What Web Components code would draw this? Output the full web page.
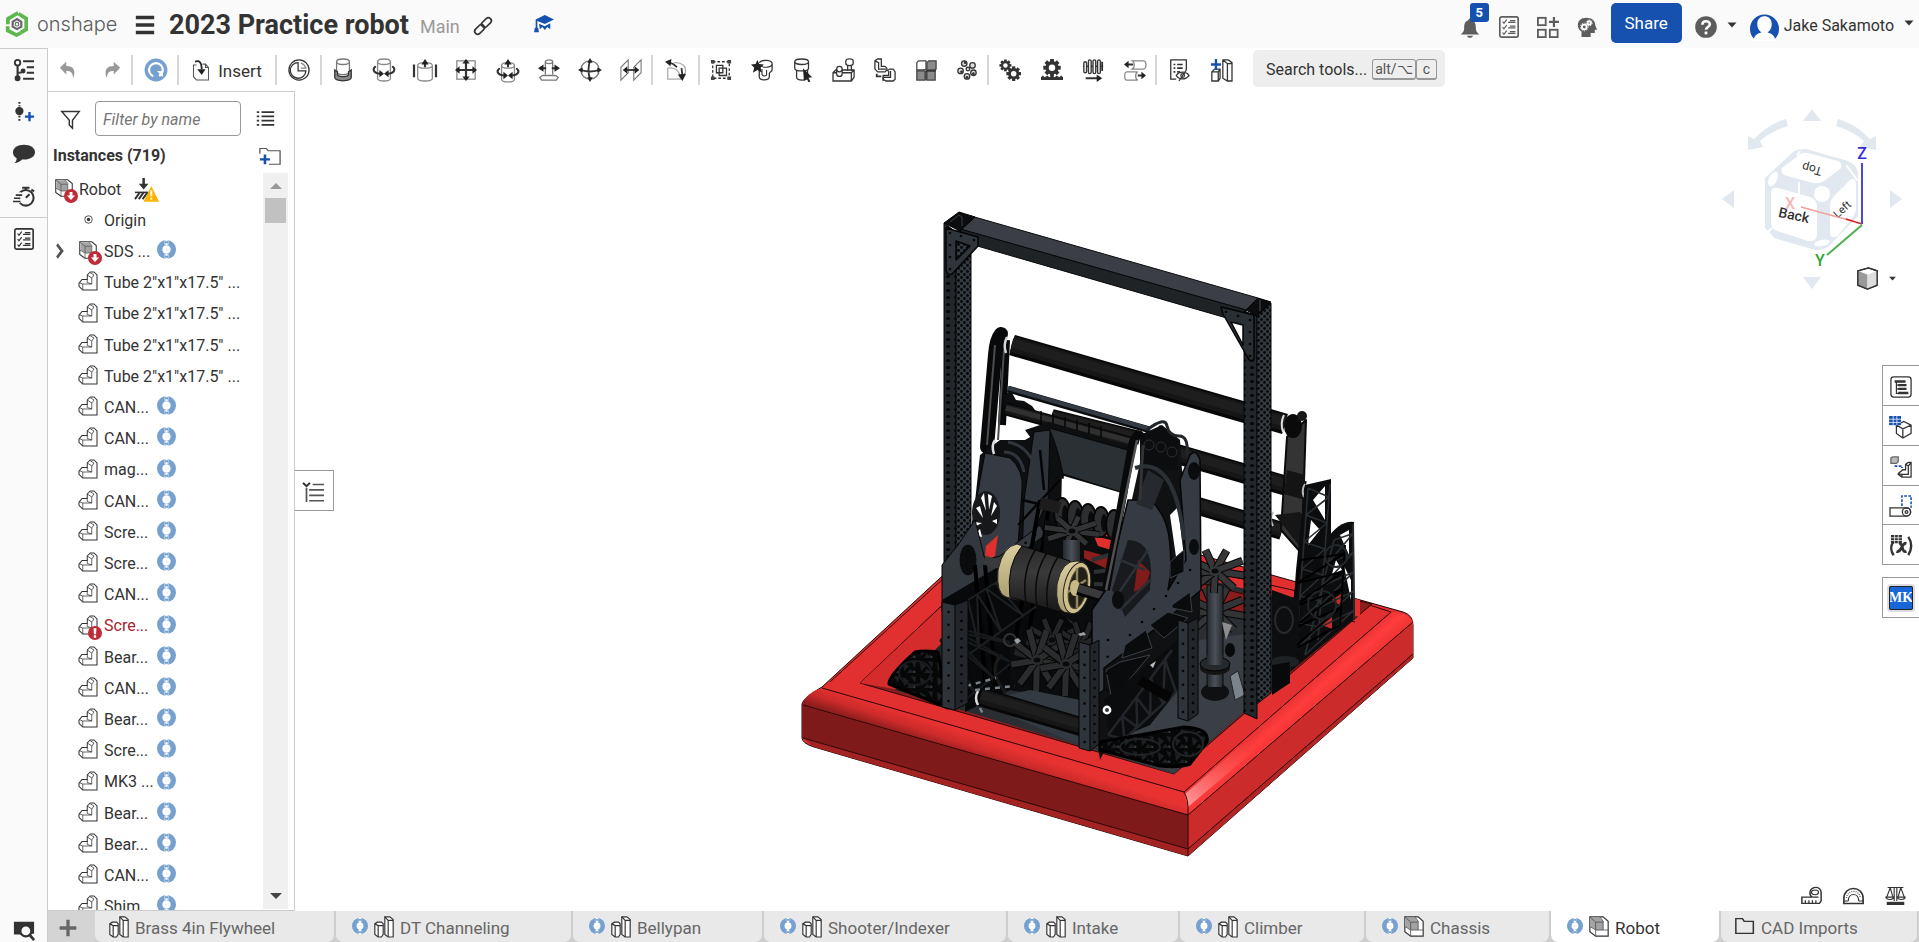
<!DOCTYPE html>
<html lang="en">
<head>
<meta charset="utf-8">
<title>2023 Practice robot</title>
<style>
html, body { margin: 0; height: 100%; }
body { font-family: Roboto, "Liberation Sans", sans-serif; font-size: 16px; color: #333; background: #fff; }
</style>
</head>
<body>
<os-app></os-app>
<script>
const reset = `
  *, *::before, *::after { box-sizing: border-box; }
  button { font: inherit; color: inherit; background: none; border: 0; margin: 0; padding: 0; display: flex; align-items: center; justify-content: center; cursor: pointer; }
`;

function define(name, css, html, setup) {
  const template = document.createElement('template');
  template.innerHTML = `<style>${reset}${css}</style>${html}`;
  customElements.define(name, class extends HTMLElement {
    constructor() {
      super();
      this.attachShadow({ mode: 'open' }).append(template.content.cloneNode(true));
    }
    connectedCallback() { if (setup) setup(this, this.shadowRoot); }
  });
}

/* Icons, each on a 24 x 24 grid */
const gear = (cx, cy, r, hole, bg = '#fff') => {
  let teeth = '';
  for (let i = 0; i < 8; i++) teeth += `<rect x="${cx - r * 0.22}" y="${cy - r}" width="${r * 0.44}" height="${r}" transform="rotate(${i * 45} ${cx} ${cy})"/>`;
  return `<g fill="#333" stroke="none">${teeth}<circle cx="${cx}" cy="${cy}" r="${r * 0.76}"/><circle cx="${cx}" cy="${cy}" r="${hole}" fill="${bg}"/></g>`;
};
const cyl = (x, y, w, h) => `<path d="M${x} ${y + 3}v${h}c0 4 ${w} 4 ${w} 0v-${h}" fill="#fff"/><ellipse cx="${x + w / 2}" cy="${y + 3}" rx="${w / 2}" ry="3" fill="#fff"/>`;
const asm = '<path d="M1 1h16l6 5v17H8l-7-5z" fill="#fff"/><path d="M2 2h11l4 4v10H8l-6-4z" fill="#a3a3a3" stroke="none"/><path d="M13 1l4 5v10h6M8 7h9M8 7v16M1 1l7 6M17 16H8l-7-4" stroke="#555" stroke-width="1"/>';

const icons = {
  logo: '<g fill="none" stroke="#5cb84c" stroke-width="3.4"><path d="M13 1.8 3.6 7.2v5"/><path d="M3.4 14v4l8.200 4.200 4-2"/><path d="M13.500 2.500 20.500 7v10l-5 3"/></g><path d="M12 7.500 8 10v4.500l4 2.200 4-2.200V10z" stroke="#666" stroke-width="2"/><circle cx="12" cy="12.200" r="1.700" stroke="#666" stroke-width="1"/>',
  menu: '<path d="M2 3h20M2 12h20M2 21h20" stroke-width="4.400"/>',
  link: '<g stroke-width="2.200" transform="rotate(-45 12 12)"><rect x="-2" y="8" width="15" height="8" rx="4"/><rect x="11" y="8" width="15" height="8" rx="4"/></g>',
  grad: '<g fill="#1651b0" stroke="none"><path d="M13 0 24 6 13 12 4 8V18H2V6z"/><path d="M6 11.500 13 15l6.500-4v8L16 16l-3 4-3-4-3 3z"/><path d="M1 17h4l1 6H0z"/></g>',
  bell: '<path d="M12 1.500a2 2 0 0 1 2 2c4 1 5 4 5 8 0 4 1 5 4 7.500H1c3-2.500 4-3.500 4-7.500 0-4 1-7 5-8a2 2 0 0 1 2-2zM8.500 20.500h7c-.5 3-6.500 3-7 0z" fill="#5d5d5d" stroke="none"/>',
  check: '<rect x="2" y="1" width="20" height="22" rx="2" stroke-width="1.800"/><path d="M5 6l1.500 2L9.500 4M5 12l1.500 2 3-4M5 18l1.500 2 3-4" stroke-width="1.300"/><path d="M11 7h8M11 13h8M11 19h8M13 5h6M13 11h6M13 17h6" stroke-width="1.500"/>',
  grid: '<g stroke-width="2"><rect x="1" y="2" width="8.500" height="8"/><rect x="1" y="15" width="8.500" height="8"/><rect x="14" y="15" width="8.500" height="8"/><path d="M18.500 1v11M13 6.500h11" stroke-width="2.400"/></g>',
  head: '<path d="M11 2c6 0 10 3 10 8l2 5h-2.500v3.500H16V23H6v-6c-3-2-4-5-4-7 0-5 4-8 9-8z" fill="#5d5d5d" stroke="none"/><g fill="none" stroke="#fff" stroke-width="2"><circle cx="9" cy="12" r="2.600"/><circle cx="14.500" cy="7.500" r="1.800"/></g><g stroke="#fff" stroke-width="1" stroke-dasharray="1.300 1.500"><circle cx="9" cy="12" r="4.200"/><circle cx="14.500" cy="7.500" r="3.200"/></g>',
  help: '<circle cx="12" cy="12" r="11.800" fill="#5d5d5d" stroke="none"/><path d="M8 9.500c0-5 8.200-5 8.200-.5 0 3-4.200 3-4.200 6" stroke="#fff" stroke-width="2.800"/><rect x="10.500" y="17" width="3" height="3" fill="#fff" stroke="none"/>',
  caret: '<path d="M3 7h18l-9 10z" fill="#333" stroke="none"/>',
  user: '<path d="M3 22a12 12 0 1 1 18 0z" fill="#1651b0" stroke="none"/><path d="M3 24c0-5 4-6.500 6.500-7C7 15 6 13 6 10c0-4.500 3-6.500 6-6.500s6 2 6 6.500c0 3-1 5-3.500 7 2 .5 6.500 2 6.500 7z" fill="#fff" stroke="none"/>',
  undo: '<path d="M2 9.500 9 3v4.500c8 0 11 5 7.500 13.500-.3-6-2.500-8-7.500-8V17z" fill="#999" stroke="none"/>',
  redo: '<path d="M22 9.500 15 3v4.500c-8 0-11 5-7.500 13.500.3-6 2.500-8 7.500-8V17z" fill="#999" stroke="none"/>',
  rebuild: '<circle cx="12" cy="12" r="12.500" fill="#75a0cf" stroke="none"/><path d="M9 18.800a7.500 7.500 0 1 1 6.500-.3" stroke="#fff" stroke-width="2.400"/><path d="M13 13h6.500v7z" fill="#fff" stroke="none"/>',
  insert: '<path d="M6 6H2v14l4 4h16V9l-4-4h-4M18 5v4h4M6 6v-0" stroke="#555"/><path d="M4 2c6-2 9 1 9 9" stroke="#222" stroke-width="2.200"/><path d="M13 18l-6-7h11z" fill="#222" stroke="none"/>',
  clock: '<circle cx="12" cy="12" r="11"/><path d="M11 4a8.500 8.500 0 1 0 8.500 9H11z"/><path d="M14 4.500a8 8 0 0 1 5.500 5.500H14" stroke="#888"/>',
  fasten: '<g stroke="#777">' + cyl(5, 0, 14, 11) + '</g><path d="M3 12v8c0 5 18 5 18 0v-8l-3 2v3c0 3-12 3-12 0v-3z" fill="#8a8a8a"/>',
  revolve: '<g stroke="#888">' + cyl(5, 0, 14, 18) + '</g><path d="M3 8c-5 4-1 8 5 8M21 8c5 4 1 8-5 8" stroke-width="2.200"/><path d="M7 12v8l5-4zM17 12v8l-5-4z" fill="#222" stroke="none"/>',
  slider: '<g stroke="#888">' + cyl(4, 4, 16, 14) + '</g><path d="M0 6v14M24 6v14" stroke-width="2.400"/><path d="M12 9V3" stroke-width="2.400"/><path d="M8 6l4-6 4 6z" fill="#222" stroke="none"/>',
  planar: '<rect x="2" y="2" width="20" height="20" stroke="#888"/><path d="M12 3v18M3 12h18" stroke-width="2.400"/><path d="M12 0l4 5H8zM12 24l4-5H8zM0 12l5-4v8zM24 12l-5-4v8z" fill="#222" stroke="none"/>',
  cylmate: '<g stroke="#888">' + cyl(5, 4, 14, 15) + '</g><path d="M3 10c-5 4-1 8 5 8M21 10c5 4 1 8-5 8M12 9V3" stroke-width="2.200"/><path d="M7 14v8l5-4zM17 14v8l-5-4zM8 6l4-6 4 6z" fill="#222" stroke="none"/>',
  pinslot: '<g stroke="#777"><path d="M8 3v14M16 3v14M5 18h14l3 2-2 3H4l-2-3z"/><ellipse cx="12" cy="3" rx="4" ry="2"/></g><path d="M3 10h6M15 10h6" stroke-width="2.200"/><path d="M0 10l6-4v8zM24 10l-6-4v8z" fill="#222" stroke="none"/>',
  ball: '<circle cx="12" cy="12" r="10" stroke="#777"/><path d="M12 2c-2 6-2 14 0 20M2 12c6 2 14 2 20 0" stroke-width="2"/><path d="M12-1l3 5H9zM12 25l3-5H9zM-1 12l5-3v6zM25 12l-5-3v6z" fill="#222" stroke="none"/>',
  parallel: '<path d="M1 23V9l8-8v14zM15 23V9l8-8v14z" stroke="#777" stroke-width="1.200"/><path d="M6 12h12" stroke-width="2"/><path d="M3 12l5-4v8zM21 12l-5-4v8z" fill="#222" stroke="none"/>',
  tangent: '<path d="M3 22V10c8-2 14 4 14 12zM10 4c8-1 14 4 12 11l-4 7" stroke="#aaa"/><path d="M5 4c5 1 6 3 8 5M18 10l1 8" stroke-width="2"/><path d="M0 3l7-3-1 8zM19 24l-5-7 9-1z" fill="#222" stroke="none"/>',
  group: '<path d="M3 3h18v18H3z" stroke-dasharray="3 2"/><path d="M7 7h7v8H7zM10 10h8v8h-8z" fill="#fff"/><g fill="#444" stroke="none"><path d="M1 1h4v4H1zM19 1h4v4h-4zM1 19h4v4H1zM19 19h4v4h-4z"/></g>',
  star: '<path d="M9 4c3-4 14-3 14 1v7c0 2-3 2-3 4v3c0 5-11 5-11 0v-8" fill="#fff"/><path d="M12 11v6c1 2 5 2 5 0v-5M23 6c-1 3-8 4-11 2" stroke-width="1.200"/><path d="M7 1l2 4.500 5 .5-3.500 3.500L12 15l-5-3-5 3 1.500-5.500L0 6l5-.5z" fill="#222" stroke="none"/>',
  cursor: cyl(3, 0, 15, 7) + '<path d="M5 12v8c1 4 11 4 12 0v-8"/><path d="M12 10l10 10-4 .5 2 4-2 .8-2-4-3 2.700z" fill="#222" stroke="none"/>',
  subasm: '<path d="M0 15l3-3h20v8l-3 4H0zM0 15h20v9M20 15l3-3" fill="#fff"/>' + cyl(4, 8, 6, 5) + '<path d="M14 2c0-3 8-3 8 0v3c0 3-8 3-8 0zM16 7v6M20 7v6" fill="#fff"/>',
  pattern: '<path d="M1 2l3-2h4v8h4l2 2v2l-2 2H4l-3-3zM1 2l4 2v7h8M14 13l3-2h4l2 3v8l-2 2h-8l-3-2v-4h6v-5" /><path d="M3 16v3h5" stroke-width="2"/><path d="M10 24v-4h8v-7"/>',
  quad: '<g fill="#8a8a8a" stroke="#444"><path d="M2 13h9v10H2zM13 13h9v10h-9z"/><path d="M13 4l2-2h8v9l-2 1h-8z"/><path d="M2 4l2-2h8v9l-2 1H2z" fill="#fff"/></g><path d="M12 13h11M12 13v10"/>',
  circ: '<g fill="#ddd" stroke="#333"><circle cx="9" cy="5" r="3"/><circle cx="18" cy="7" r="3"/><circle cx="5" cy="13" r="3"/><circle cx="13" cy="11" r="2"/><circle cx="19" cy="15" r="3"/><circle cx="12" cy="19" r="3"/></g><g fill="#333" stroke="none"><circle cx="10" cy="4" r="1.500"/><circle cx="6" cy="14" r="1.500"/><circle cx="12" cy="20" r="1.500"/><circle cx="19" cy="16" r="1.500"/></g>',
  gears: gear(7, 7, 6.500, 2.500) + gear(16, 16, 8, 3),
  rack: gear(12, 9.500, 9.500, 3.500) + '<path d="M0 23h24v-3l-2-2-2 2-3-2-2 2-3-2-3 2-2-2-3 2-2-2-2 2z" fill="#333" stroke="none"/>',
  screw: '<path d="M1 8h22" stroke-width="1.500"/><g fill="#fff" stroke-width="1.500"><rect x="2" y="3" width="3" height="12" rx="1.500"/><rect x="7" y="1" width="3" height="15" rx="1.500"/><rect x="12" y="1" width="3" height="15" rx="1.500"/><rect x="17" y="1" width="3" height="15" rx="1.500"/></g><path d="M22 3v10" stroke-width="2"/><path d="M4 21h13" stroke-width="2.200"/><path d="M16 17l6 4-6 4z" fill="#222" stroke="none"/>',
  linear: '<g stroke="#888"><path d="M9 2h12c4 0 4 9 0 9H9c3-2 3-7 0-9zM3 14h12M3 23h12M3 14c-3 0-3 9 0 9M15 14c-3 1-3 8 0 9"/></g><path d="M3 6h7M15 18h6" stroke-width="2"/><path d="M0 6l5-4v8zM24 18l-5-4v8z" fill="#222" stroke="none"/>',
  note: '<path d="M9 22H3V1h17v11"/><path d="M6 6h2M10 6h6M6 10h2M10 10h6M6 14h2M10 14h3" stroke-width="1.800"/><path d="M9 18c3-5 11-5 14 0-4 5-11 5-14 0zM12 24l8-12"/><circle cx="16" cy="18" r="2"/>',
  plusparts: '<path d="M2 14l3-3h6v10l-2 3H2zM2 14h7v10M9 14l2-3M14 1h6l4 3v20h-5l-5-3zM14 1l5 4v19M19 5h5"/><path d="M6.500 0v12M1 6h11" stroke="#1651b0" stroke-width="2.600"/>',
  tree: '<circle cx="5" cy="4" r="3" stroke-width="2"/><path d="M5 7v14M5 15c6 0 6-1 6-4" stroke-width="2.300"/><circle cx="5" cy="21" r="2.500" fill="#333"/><circle cx="11" cy="13" r="2" fill="#333"/><path d="M11 2.500h12M15 9h8M15 15h8M11 21.500h12" stroke-width="2.300"/>',
  mateadd: '<path d="M7 1v5M7 16v6" stroke-width="2.200" stroke-dasharray="2 1.500"/><circle cx="7" cy="11" r="3.800" fill="#333"/><path d="M18 12v10M13 17h10" stroke="#1651b0" stroke-width="2.600"/>',
  comment: '<path d="M12 2c7 0 12 3.500 12 8s-5 8-12 8h-2c-2 2-5 4-9 4 2-1 3-3 3-5.500C1 15 0 12.500 0 10c0-4.500 5-8 12-8z" fill="#333" stroke="none"/>',
  timer: '<circle cx="14" cy="14" r="8.500" stroke-width="2.200"/><path d="M14 14l4-4M10 3h8M14 3v3M20 5l3 2" stroke-width="2.200"/><path d="M2 10h7M0 14h7M2 18h6" stroke="#fafafa" stroke-width="4"/><path d="M3 11h7M1 14.500h7M0 18h8" stroke-width="1.800"/>',
  searchtab: '<path d="M1 3h22v13h-3a6 6 0 1 0-11 1H1z" fill="#333" stroke="none"/><circle cx="14" cy="13" r="6" fill="#fafafa" stroke-width="2.400"/><path d="M18 17l5 6" stroke-width="3"/>',
  funnel: '<path d="M1 2h22l-8.500 11v10l-4-4v-6z" stroke-width="1.800"/>',
  list: '<path d="M7 3h16M7 9h16M7 15h16M7 21h16M1 3h3M1 9h3M1 15h3M1 21h3" stroke-width="2.800"/>',
  folderadd: '<path d="M1 9V2h7l2 3h13v18H11" stroke="#555"/><path d="M6.500 10v13M1 16.500h11" stroke="#1651b0" stroke-width="2.800"/>',
  folder: '<path d="M1 23V1h8l2 4h11v18z" stroke-width="1.800"/>',
  part: '<path d="M11 4l4-4h5l4 4v20H5l-5-5v-4l4-5h7z" fill="#fff"/><path d="M11 4l6 4v8H5l-5-2M5 16v8M11 10v4l6 2M17 8l3-4-5-3" stroke-width="1"/>',
  asm,
  twoparts: '<path d="M1 9l3-2h5l2 2v12l-2 3H5l-4-3z" fill="#fff"/><path d="M1 9l4 2h6M5 11v13M13 1h6l4 3v20h-6l-4-3z" fill="#fff"/><path d="M13 1l4 4h6M17 5v19"/>',
  down: '<circle cx="12" cy="12" r="12" fill="#bf2c37" stroke="none"/><path d="M9.500 5h5v6H19l-7 8-7-8h4.500z" fill="#fff" stroke="none"/>',
  error: '<circle cx="12" cy="12" r="12" fill="#bf2c37" stroke="none"/><path d="M9.500 4h5l-.7 10h-3.600zM10 16h4v4h-4z" fill="#fff" stroke="none"/>',
  ground: '<path d="M9 0v8" stroke-width="2.600"/><path d="M4 6h10l-5 6z" fill="#333" stroke="none"/><path d="M0 15h14" stroke-width="1.600"/><path d="M5 15l-5 7M9 15l-5 7M13 15l-5 7" stroke-width="2"/><path d="M17 10l7 14H10z" fill="#fcb400" stroke="#fcb400"/><path d="M17 13v6M17 20.500v2" stroke="#fff" stroke-width="2"/>',
  origin: '<circle cx="12" cy="12" r="10" stroke-width="2.200"/><circle cx="12" cy="12" r="4.500" fill="#333" stroke="none"/>',
  chevron: '<path d="M6 2l10 10-10 10" stroke="#555" stroke-width="5"/>',
  mate: '<circle cx="12" cy="12" r="12" fill="#75a0cf" stroke="none"/><path d="M9.500 0v7M14.500 0v7M9.500 17v7M14.500 17v7" stroke="#b9cfe8" stroke-width="1"/><circle cx="12" cy="12" r="5.200" fill="#fff" stroke="none"/><circle cx="12" cy="12" r="1.500" fill="#e8f0f8" stroke="none"/><path d="M12 0v1.500M12 4v3M12 17v3M12 22.500V24" stroke="#fff" stroke-width="3"/>',
  outline: '<path d="M0 1l4 4 4-4" stroke-width="2.400"/><path d="M4 7v17M11 3h13M7 9.500h17M7 16h17M7 22.500h17" stroke="#555" stroke-width="2"/>',
  bom: '<rect x="1" y="1" width="22" height="22" rx="3"/><path d="M5 6h12M9 10h9M9 14h9M9 18.500h11" stroke-width="2.600"/><path d="M7 6v13h3M7 14h3M7 10h3" stroke-width="1.300"/>',
  config: '<path d="M7 10l8-4 8 4v9l-9 5-7-5zM7 10l7 4 9-4M14 14v10" fill="#fff"/><path d="M-1 0h13v10H-1z" fill="#1651b0" stroke="none"/><path d="M-1 3.500h13M-1 7h13M3.500 0v10M7.500 0v10" stroke="#fff" stroke-width=".8"/>',
  mirrorp: '<path d="M1 2l2-1h6v5l-2 2H1z" fill="#bbb" stroke="#666"/><path d="M5 11h8v2" stroke="#1651b0" stroke-dasharray="3 1.500" stroke-width="2"/><path d="M9 19l5-4h3V9l3-2h3v16H13l-4-3zM9 19l4 1h7v-9l3-4M13 20v3M17 9l3 2"/>',
  hinge: '<path d="M13 12V1h10v13" stroke="#1651b0" stroke-dasharray="3 1.500" stroke-width="1.700"/><path d="M0 14h18a4.500 4.500 0 1 1 0 9H0z" fill="#fff"/><circle cx="18" cy="18.500" r="4.500"/><circle cx="18" cy="18.500" r="1.500"/>',
  variable: '<path d="M4 7c-4 5-3 11 0 15M20 2c4 6 4 13 0 20" stroke-width="2.600"/><path d="M7 18c6 2 5-10 11-9M10 10c5-2 2 10 8 8" stroke-width="3"/><path d="M1 0h12v9H1z" fill="#333" stroke="none"/><path d="M1 3h12M1 6h12M5 0v9M9 0v9" stroke="#fff" stroke-width=".8"/>',
  shaded: '<path d="M2 4l11-3 9 3v15l-10 4L2 19z" fill="#fff"/><path d="M2 4l10 4v15L2 19z" fill="#999" stroke="none"/><path d="M12 8l10-4v15l-10 4z" fill="#ddd" stroke="none"/><path d="M2 4l11-3 9 3v15l-10 4L2 19z"/>',
  tape: '<path d="M1 14h12c-4-2-4-10 2-12 5-1 8 2 8 6v11l-2 3H1z" stroke-width="1.700"/><ellipse cx="16" cy="8" rx="4" ry="3"/><path d="M13 14h7M5 22v-4M9 22v-4M13 22v-4M17 22v-4"/>',
  protractor: '<path d="M1 22v-6c0-17 22-17 22 0v6z" stroke-width="1.900"/><path d="M6 19c0-11 12-11 12 0M1 19h5M18 19h5" /><path d="M4 15c2-11 14-11 16 0" stroke-dasharray="1 1.500"/>',
  scale: '<path d="M3 2h18M10.500 2v17M13.500 2v17M6 2 2 14M6 2l3 12M18 2l-3 12M18 2l4 12" stroke-width="1.300"/><path d="M1 14h9c0 4-9 4-9 0zM14 14h9c0 4-9 4-9 0z"/><path d="M2 20h20v4H2z" fill="#333" stroke="none"/>',
  plus: '<path d="M12 2v20M2 12h20" stroke="#666" stroke-width="4"/>'
};

define('os-icon', `
  :host { display: inline-flex; width: 24px; height: 24px; flex: none; }
  svg { width: 100%; height: 100%; fill: none; stroke: #333; stroke-width: 1.4px; overflow: visible; }
  :host([tone="grey"]) svg { stroke: #5d5d5d; }
`, `<svg viewBox="0 0 24 24" preserveAspectRatio="none" aria-hidden="true"></svg>`,
(host, root) => { root.querySelector('svg').innerHTML = icons[host.getAttribute('name')] || ''; });

define('os-header', `
  :host { display: flex; align-items: center; height: 48px; background: #fafafa; padding: 0 4px; }
  .brand { display: flex; align-items: center; gap: 7px; color: #5d5d5d; font: 300 20px/24px Inter, sans-serif; text-decoration: none; width: 130px; }
  .brand os-icon { width: 26px; height: 26px; }
  .menu { padding-top: 2px; }
  .menu os-icon { width: 22px; height: 20px; }
  h1 { margin: 2px 0 0 13px; font-size: 27px; line-height: 36px; font-weight: 700; white-space: nowrap; }
  .branch { font-size: 18px; line-height: 24px; color: #999; margin: 6px 14px 0 11px; }
  .link { padding-top: 4px; }
  .link os-icon { width: 18px; height: 18px; }
  .grad { margin: -1px 0 0 42px; }
  .grad os-icon { width: 20px; height: 18px; }
  .right { margin-left: auto; display: flex; align-items: center; }
  .bell { position: relative; margin-right: 18px; }
  .bell os-icon { width: 20px; height: 22px; margin-top: 8px; }
  .badge { position: absolute; left: 10px; top: -6px; width: 19px; height: 19px; border-radius: 3px; background: #1651b0; color: #fff; font: 700 13px/19px Roboto, sans-serif; text-align: center; }
  .sq { margin: 6px 17px 0 0; }
  .sq os-icon { width: 22px; height: 22px; }
  .share { background: #1651b0; color: #fff; font-size: 17px; border-radius: 5px; width: 71px; height: 40px; margin: -2px 13px 0 -4px; }
  .help { gap: 9px; margin-right: 12px; }
  .help os-icon { margin-top: 6px; width: 22px; height: 22px; }
  .account { gap: 5px; white-space: nowrap; padding-top: 2px; }
  .account .face { width: 29px; height: 29px; margin-top: 2px; }
  .help .c, .account .c { width: 12px; height: 12px; margin-top: 2px; }
  .account .c { margin: 0 0 4px 4px; }
`, `
  <a class="brand" href="#"><os-icon name="logo"></os-icon>onshape</a>
  <button class="menu" aria-label="Menu"><os-icon name="menu"></os-icon></button>
  <h1>2023 Practice robot</h1>
  <span class="branch">Main</span>
  <button class="link" aria-label="Copy link"><os-icon name="link"></os-icon></button>
  <button class="grad" aria-label="Learning center"><os-icon name="grad"></os-icon></button>
  <div class="right">
    <button class="bell" aria-label="Notifications"><os-icon name="bell"></os-icon><span class="badge">5</span></button>
    <button class="sq" aria-label="Tasks"><os-icon name="check" tone="grey"></os-icon></button>
    <button class="sq" aria-label="App store"><os-icon name="grid" tone="grey"></os-icon></button>
    <button class="sq" aria-label="Learning"><os-icon name="head"></os-icon></button>
    <button class="share">Share</button>
    <button class="help" aria-label="Help"><os-icon name="help"></os-icon><os-icon class="c" name="caret"></os-icon></button>
    <button class="account"><os-icon class="face" name="user"></os-icon>Jake Sakamoto<os-icon class="c" name="caret"></os-icon></button>
  </div>
`);

define('os-tool-group', `
  :host { display: flex; flex: 0 0 auto; height: 30px; border-right: 2px solid #d6d6d6; width: calc(var(--w) * 1px); }
  :host([last]) { border-right: 0; }
  button { flex: 1; height: 30px; padding-left: 1px; }
  os-icon { width: 22px; height: 22px; }
`, ``, (host, root) => {
  host.style.setProperty('--w', host.getAttribute('w'));
  host.getAttribute('tools').split(' ').forEach(t => {
    const b = document.createElement('button');
    b.setAttribute('aria-label', t);
    b.innerHTML = `<os-icon name="${t}"></os-icon>`;
    root.append(b);
  });
});

define('os-toolbar', `
  :host { display: flex; align-items: center; height: 43px; background: #fff; padding-top: 1px; }
  .insert { width: 98px; height: 30px; gap: 8px; font-size: 17px; border-right: 2px solid #d6d6d6; flex: none; padding-top: 2px; }
  .insert os-icon { width: 18px; height: 20px; margin-top: -2px; }
  .search { margin: -4px 0 0 12px; height: 37px; width: 192px; background: #eee; border-radius: 5px; justify-content: flex-start; padding: 2px 0 0 13px; white-space: nowrap; }
  kbd { font: 14px/18px Roboto, sans-serif; border: 1px solid #999; border-bottom-width: 2px; border-radius: 3px; padding: 0 3px; height: 21px; margin-top: 1px; color: #555; }
  kbd:first-of-type { margin-left: 5px; padding: 0 2px; }
  kbd + kbd { padding: 0 6px; }
`, `
  <os-tool-group w="85" tools="undo redo"></os-tool-group>
  <os-tool-group w="46" tools="rebuild"></os-tool-group>
  <button class="insert"><os-icon name="insert"></os-icon>Insert</button>
  <os-tool-group w="45" tools="clock"></os-tool-group>
  <os-tool-group w="331" tools="fasten revolve slider planar cylmate pinslot ball parallel"></os-tool-group>
  <os-tool-group w="47" tools="tangent"></os-tool-group>
  <os-tool-group w="289" tools="group star cursor subasm pattern quad circ"></os-tool-group>
  <os-tool-group w="168" tools="gears rack screw linear"></os-tool-group>
  <os-tool-group last w="84" tools="note plusparts"></os-tool-group>
  <button class="search">Search tools...<kbd>alt/⌥</kbd><kbd>c</kbd></button>
`);

define('os-rail', `
  :host { display: flex; flex-direction: column; align-items: stretch; background: #fafafa; border-top: 1px solid #ccc; border-right: 1px solid #ccc; }
  button { height: 42px; }
  button os-icon { width: 22px; height: 22px; }
  .line { border-bottom: 1px solid #ccc; }
  .last { margin-top: auto; height: 24px; }
`, `
  <button aria-label="Versions"><os-icon name="tree"></os-icon></button>
  <button aria-label="Add mate connector"><os-icon name="mateadd"></os-icon></button>
  <button aria-label="Comments"><os-icon name="comment"></os-icon></button>
  <button aria-label="History"><os-icon name="timer"></os-icon></button>
  <div class="line"></div>
  <button aria-label="Checklist"><os-icon name="check"></os-icon></button>
  <button class="last" aria-label="Search tabs"><os-icon name="searchtab"></os-icon></button>
`);

define('os-tree-row', `
  :host { display: flex; align-items: center; padding: 1px 0 0 30px; white-space: nowrap; font-size: 16px; min-width: 0; }
  :host([root]) { padding-left: 6px; }
  :host([chevron]) { padding-left: 7px; }
  .chev { width: 10px; margin-right: 13px; }
  .chev os-icon { width: 12px; height: 16px; }
  :host(:not([chevron])) .chev { display: none; }
  .icon { position: relative; display: flex; justify-content: center; width: 20px; margin-right: 6px; }
  .icon > os-icon { width: 18px; height: 18px; margin-top: -2px; }
  :host([icon="origin"]) .icon > os-icon { width: 9px; height: 9px; margin-top: -1px; }
  .mark { position: absolute; left: 10px; top: 8px; }
  .icon > os-icon.mark { width: 14px; height: 14px; margin-top: 0; }
  :host([error]) .label { color: #a8232d; }
  :host([mate]) .label { width: 53px; }
  .mate { width: 19px; height: 19px; margin-top: -3px; }
  .ground { width: 23px; height: 23px; margin-left: 14px; }
  :host([root]) .icon { margin-right: 5px; }
`, `
  <button class="chev" aria-label="Expand"><os-icon name="chevron"></os-icon></button>
  <span class="icon"></span><span class="label"><slot></slot></span>
`, (host, root) => {
  const icon = host.getAttribute('icon') || 'part', mark = host.getAttribute('mark');
  root.querySelector('.icon').innerHTML = `<os-icon name="${icon}"></os-icon>` + (mark ? `<os-icon class="mark" name="${mark}"></os-icon>` : '');
  if (host.hasAttribute('mate')) root.querySelector('.label').insertAdjacentHTML('afterend', '<os-icon class="mate" name="mate"></os-icon>');
  if (host.hasAttribute('root')) root.querySelector('.label').insertAdjacentHTML('afterend', '<os-icon class="ground" name="ground"></os-icon>');
});

const m = (t, extra = '') => `<os-tree-row mate ${extra}>${t}</os-tree-row>`;
const tube = '<os-tree-row>Tube 2"x1"x17.5" ...</os-tree-row>';
define('os-tree', `
  :host { display: flex; flex-direction: column; border: 1px solid #ccc; border-left: 0; background: #fff; min-height: 0; min-width: 0; }
  .filter { display: flex; align-items: center; padding: 9px 19px 0 13px; }
  .filter os-icon { width: 19px; height: 19px; margin-top: 2px; }
  .filter button:last-child os-icon { height: 17px; margin-top: 0; }
  input { width: 146px; height: 35px; margin: 0 15px 0 15px; border: 1px solid #999; border-radius: 4px; padding: 2px 7px 0; font: italic 16px/20px Roboto, sans-serif; color: #333; }
  input::placeholder { color: #757575; opacity: 1; }
  .head { display: flex; align-items: center; justify-content: space-between; height: 37px; padding: 3px 13px 0 5px; }
  h2 { margin: 0; font-size: 16px; line-height: 20px; font-weight: 700; }
  .head os-icon { width: 22px; height: 18px; }
  .body { flex: 1; display: flex; min-height: 0; margin-right: 6px; }
  .rows { flex: 1; overflow: hidden; display: grid; grid-auto-rows: 31px 31px 31px 31px 32px; min-width: 0; align-content: start; }
  .bar { width: 25px; background: #f0f0f0; display: flex; flex-direction: column; align-items: center; margin-bottom: 1px; }
  .bar i { border: 6px solid transparent; }
  .bar .up { border-top: 0; border-bottom-color: #999; margin: 10px 0 9px; }
  .thumb { width: 21px; height: 25px; background: #c1c1c1; }
  .bar .dn { border-bottom: 0; border-top-color: #444; margin: auto 0 10px; }
`, `
  <div class="filter"><button aria-label="Filter"><os-icon name="funnel"></os-icon></button><input aria-label="Filter by name" placeholder="Filter by name"><button aria-label="List view"><os-icon name="list"></os-icon></button></div>
  <div class="head"><h2>Instances (719)</h2><button aria-label="Add folder"><os-icon name="folderadd"></os-icon></button></div>
  <div class="body">
    <div class="rows">
      <os-tree-row root icon="asm" mark="down">Robot</os-tree-row>
      <os-tree-row icon="origin">Origin</os-tree-row>
      ${m('SDS ...', 'chevron icon="asm" mark="down"')}
      ${tube}${tube}${tube}${tube}
      ${['CAN...', 'CAN...', 'mag...', 'CAN...', 'Scre...', 'Scre...', 'CAN...'].map(t => m(t)).join('')}
      ${m('Scre...', 'error mark="error"')}
      ${['Bear...', 'CAN...', 'Bear...', 'Scre...', 'MK3 ...', 'Bear...', 'Bear...', 'CAN...', 'Shim...'].map(t => m(t)).join('')}
    </div>
    <div class="bar"><i class="up"></i><span class="thumb"></span><i class="dn"></i></div>
  </div>
`);

/* Robot model */
const star = (cx, cy, rx, ry, n, w, c = '#2b2b2c') => {
  let s = '';
  for (let i = 0; i < n; i++) {
    const a = (i + 0.3) * 2 * Math.PI / n, x = cx + rx * Math.cos(a), y = cy + ry * Math.sin(a);
    s += `<path d="M${cx} ${cy}L${x.toFixed(1)} ${y.toFixed(1)}" stroke="#050505" stroke-width="${w + 2}"/><path d="M${cx} ${cy}L${x.toFixed(1)} ${y.toFixed(1)}" stroke="${c}" stroke-width="${w}"/>`;
  }
  return s + `<ellipse cx="${cx}" cy="${cy}" rx="6" ry="5" fill="${c}"/><ellipse cx="${cx}" cy="${cy}" rx="3.500" ry="2.500" fill="#0a0a0a"/>`;
};
const roller = (x1, y1, x2, y2, w) => `<path d="M${x1} ${y1}L${x2} ${y2}" stroke="#070707" stroke-width="${w}"/><path d="M${x1} ${y1 - w * 0.04}L${x2} ${y2 - w * 0.04}" stroke="#161616" stroke-width="${w * 0.76}"/><path d="M${x1} ${y1 - w * 0.1}L${x2} ${y2 - w * 0.1}" stroke="#1e1e1e" stroke-width="${w * 0.45}"/>`;
const dots = (x1, y1, x2, y2, n) => {
  let s = '';
  for (let i = 0; i < n; i++) s += `<circle cx="${(x1 + (x2 - x1) * i / (n - 1)).toFixed(1)}" cy="${(y1 + (y2 - y1) * i / (n - 1)).toFixed(1)}" r="1.300"/>`;
  return `<g fill="#050505">${s}</g>`;
};
/* Zig-zag truss lines between two rails */
const truss = (ax, ay, bx, by, cx, cy, dx, dy, n) => {
  let s = `M${ax} ${ay}L${bx} ${by}M${cx} ${cy}L${dx} ${dy}M${ax} ${ay}`;
  for (let i = 0; i <= n; i++) {
    const t = i / n, l = i % 2;
    s += `L${((l ? cx + (dx - cx) * t : ax + (bx - ax) * t)).toFixed(1)} ${((l ? cy + (dy - cy) * t : ay + (by - ay) * t)).toFixed(1)}`;
  }
  return s;
};
const post = (x, mid, x2, y1, y2, slope = 6) => `<path d="M${x} ${y1}L${mid} ${y1 + slope / 2}V${y2 + slope / 2}L${x} ${y2}Z" fill="#2f343a"/><path d="M${mid} ${y1 + slope / 2}L${x2} ${y1 - 2}V${y2 - 4}L${mid} ${y2 + slope / 2}Z" fill="#22262a"/><path d="M${x} ${y1}V${y2}L${mid} ${y2 + slope / 2}L${x2} ${y2 - 4}V${y1 - 2}L${mid} ${y1 + slope / 2}ZM${mid} ${y1 + slope / 2}V${y2 + 2}" fill="none" stroke="#050505"/>` + dots((x + mid) / 2, y1 + 10, (x + mid) / 2, y2 - 6, Math.round((y2 - y1) / 14)) + dots((x2 + mid) / 2, y1 + 10, (x2 + mid) / 2, y2 - 6, Math.round((y2 - y1) / 10));

define('os-model', `
  :host { display: block; width: 640px; max-width: 100%; }
  svg { display: block; width: 100%; height: auto; }
`, `<svg viewBox="787 200 640 670" role="img" aria-label="Robot assembly" fill="none" stroke-linejoin="round">
  <defs>
    <linearGradient id="front" gradientUnits="userSpaceOnUse" x1="990" y1="741" x2="982" y2="765"><stop offset="0" stop-color="#e83232"/><stop offset=".45" stop-color="#cc2a2a"/><stop offset="1" stop-color="#7e1a1a"/></linearGradient>
    <linearGradient id="side" gradientUnits="userSpaceOnUse" x1="1282" y1="705" x2="1298" y2="723"><stop offset="0" stop-color="#e53131"/><stop offset=".5" stop-color="#ff3c3c"/><stop offset="1" stop-color="#ef3434"/></linearGradient>
    <linearGradient id="shine" gradientUnits="userSpaceOnUse" x1="1186" y1="805" x2="1260" y2="740"><stop offset="0" stop-color="#ff9a9a"/><stop offset="1" stop-color="#ff4040" stop-opacity="0"/></linearGradient>
    <linearGradient id="floor" x1="0" y1="0" x2="1" y2="1"><stop offset="0" stop-color="#17191c"/><stop offset="1" stop-color="#3e434a"/></linearGradient>
    <linearGradient id="tan" x1="0" y1="0" x2="0" y2="1"><stop offset="0" stop-color="#dccf9f"/><stop offset="1" stop-color="#a99c70"/></linearGradient>
    <linearGradient id="drum" x1="0" y1="0" x2="0" y2="1"><stop offset="0" stop-color="#2a2a2a"/><stop offset=".4" stop-color="#3a3a3a"/><stop offset="1" stop-color="#181818"/></linearGradient>
    <linearGradient id="shaft" x1="0" y1="0" x2="1" y2="0"><stop offset="0" stop-color="#25292d"/><stop offset=".5" stop-color="#4b5158"/><stop offset="1" stop-color="#25292d"/></linearGradient>
    <pattern id="holes" width="6" height="6" patternUnits="userSpaceOnUse"><rect width="6" height="6" fill="#343a42"/><circle cx="1.500" cy="1.500" r="1.400" fill="#050505"/><circle cx="4.500" cy="4.500" r="1.400" fill="#050505"/></pattern>
    <pattern id="col" width="8" height="7" patternUnits="userSpaceOnUse"><rect width="8" height="7" fill="#22272b"/><ellipse cx="4" cy="3.500" rx="2" ry="1.600" fill="#040404"/></pattern>
    <pattern id="mesh" width="17" height="15" patternUnits="userSpaceOnUse"><rect width="17" height="15" fill="#060707"/><path d="M2 2l6 4-5 5zM10 1l5 1-1 6zM9 9l5 4H6z" fill="#1c2023"/><path d="M12 10l3 2-2 1z" fill="#40464c"/></pattern>
  </defs>

  <!-- bumper -->
  <path d="M802 704Q803 698 822 687L1003 520Q1012 508 1030 507L1403 612Q1413 615 1413 625V658L1188 856L814 747Q802 743 802 738Z" fill="#e23030" stroke="#220606"/>
  <path d="M822 688L1184 792Q1189 800 1188 815L803 705Q804 694 822 688Z" fill="url(#front)"/>
  <path d="M802 705L1188 815V849L803 738Z" fill="#7e1a1a"/>
  <path d="M803 738L1188 849V856L814 747Z" fill="#a32323"/>
  <path d="M1184 792L1391 612Q1408 612 1413 622L1188 815Q1189 800 1184 792Z" fill="url(#side)"/>
  <path d="M1185 794L1260 729L1272 736L1188 807Z" fill="url(#shine)"/>
  <path d="M1188 815L1413 622V655L1188 849Z" fill="#cb2b2b"/>
  <path d="M1188 849L1413 654V658L1188 856Z" fill="#b32626"/>
  <path d="M822 688L1184 792L1391 612L1357 601M803 705L1188 815L1413 622M803 738L1188 849L1413 654M1184 792Q1189 800 1188 815V856M830 682L945 577" stroke="#2b0707" stroke-width="1"/>
  <path d="M860 683L1030 522L1372 604L1174 774Z" fill="#8a1d1d" stroke="#2b0707"/>
  <path d="M860 683L940 608L980 600L900 690Z" fill="#d42c2c"/>
  <path d="M895 690L985 600L1110 560L1290 590L1350 618L1174 774Z" fill="url(#floor)"/>
  <path d="M1100 740L1200 640L1345 622L1174 772Z" fill="#3a3f46"/>
  <path d="M1065 545L1360 617V600L1140 545Z" fill="#e23030"/><path d="M1060 565L1270 625V600L1060 548Z" fill="#8a1d1d"/>
  <path d="M1060 548L1355 622M1060 538L1355 604" stroke="#2b0707"/>

  <!-- far rollers and linkage -->
  ${roller(1012, 345, 1285, 424, 21)}
  ${roller(1160, 449, 1304, 491, 20)}
  ${roller(1195, 505, 1282, 531, 18)}
  <path d="M1287 437L1306 420L1303 512L1340 545L1325 580L1281 530Z" fill="#343434" stroke="#0a0a0a" stroke-width="2"/>
  <path d="M1287 470L1305 475V500L1284 494Z" fill="#141414"/>
  <ellipse cx="1293" cy="426" rx="9" ry="12" fill="#0a0a0a"/><ellipse cx="1302" cy="416" rx="5" ry="5" fill="#191919"/>
  <path d="M1284 415q-4 8-1 17" stroke="#ddd" stroke-width="2"/><path d="M1305 484q-4 6-1 13M1273 512q-4 7 0 14" stroke="#bbb" stroke-width="2"/>
  <path d="M1275 515L1300 512L1345 560L1330 585Z" fill="#161616"/>

  <!-- right side trusses -->
  <path d="M1305 485L1331 479V560L1322 620L1290 655L1296 570Z" fill="#0b0c0d"/>
  <path d="M1313 500L1325 486V520ZM1311 520L1320 530L1308 545ZM1328 545L1332 530V560Z" fill="#fff"/>
  <path d="M1326 540Q1340 520 1354 522L1355 618L1290 672L1298 620Z" fill="#0c0d0e"/>
  <path d="M1340 535L1349 530V555ZM1344 566L1351 580V600ZM1336 560l6 10-10 4z" fill="#fff"/><path d="M1332 600l9-6v12zM1322 625l10-8v12z" fill="#c92a2a"/>
  <path d="${truss(1308, 488, 1296, 650, 1330, 484, 1318, 640, 12)}" stroke="#282d31" stroke-width="1.600"/>
  <path d="${truss(1334, 540, 1305, 655, 1353, 524, 1354, 620, 10)}" stroke="#282d31" stroke-width="1.600"/>
  <path d="${truss(1300, 560, 1285, 665, 1345, 545, 1340, 625, 9)}" stroke="#000" stroke-width="2"/>
  <circle cx="1336" cy="556" r="11" stroke="#22262a" stroke-width="2"/><circle cx="1322" cy="605" r="14" stroke="#202427" stroke-width="2"/>
  <path d="M1272 590L1300 600L1296 665L1272 680Z" fill="#0d0e0f"/><ellipse cx="1284" cy="620" rx="9" ry="13" stroke="#2a2a2a" stroke-width="2"/>
  <ellipse cx="1285" cy="662" rx="14" ry="6" fill="#1f2225"/><path d="M1272 665V695L1290 683V662Z" fill="#08090a"/>

  <!-- star wheels on the vertical shaft -->
  ${star(1215, 611, 31, 24, 9, 6, '#323436')}
  <path d="M1207 585H1223V690H1207Z" fill="url(#shaft)" stroke="#0a0a0a"/>
  ${star(1215, 571, 31, 22, 9, 6, '#343638')}
  <ellipse cx="1215" cy="668" rx="15" ry="7" fill="#151515"/><ellipse cx="1215" cy="664" rx="15" ry="7" fill="#26292c" stroke="#000"/><ellipse cx="1215" cy="692" rx="14" ry="9" fill="#0f1011"/>
  <path d="M1207 655h16v10h-16zM1208 675h14v12h-14z" fill="url(#shaft)"/>
  <path d="M1230 676L1238 671L1245 695L1235 700Z" fill="#7c848b" stroke="#222"/><path d="M1222 622L1232 625L1226 640Z" fill="#8c8c8c"/>
  <ellipse cx="1230" cy="650" rx="5" ry="7" fill="#08090a"/>

  <!-- frame posts and top beam -->
  <path d="M944 223L956 232V580H944Z" fill="url(#col)" stroke="#070707"/>
  <path d="M956 232L971 222V540L956 560Z" fill="url(#holes)" stroke="#070707"/>
  <path d="M971 216L1258 298L1246 310L960 229Z" fill="#3b3f45" stroke="#08090a"/>
  <path d="M960 229L1246 310L1244 323L960 241Z" fill="#1f2326" stroke="#08090a"/>
  <path d="M944 223L959 212L975 217L960 231Z" fill="#0c0d0e" stroke="#000"/><path d="M950 222L959 215L962 217V226" stroke="#3a3f45"/>
  <path d="M1244 311L1257 316V719L1244 713Z" fill="url(#col)" stroke="#070707"/>
  <path d="M1257 316L1271 303V693L1257 704Z" fill="url(#holes)" stroke="#070707"/>
  <path d="M1246 310L1258 298L1271 302L1257 316Z" fill="#0c0d0e" stroke="#000"/><path d="M1260 300V311" stroke="#4a5057"/>
  <path fill-rule="evenodd" d="M946 228L978 237V246L952 274Q947 276 946 270ZM956 241V260L970 246Z" fill="#2f353b" stroke="#050505" stroke-width="1.500"/>
  ${dots(950, 233, 950, 269, 4)}${dots(961, 236, 974, 240, 2)}
  <path fill-rule="evenodd" d="M1221 307L1254 315V359Q1251 363 1248 358L1223 314ZM1231 322L1243 345V325Z" fill="#2a2f34" stroke="#050505" stroke-width="1.500"/>
  ${dots(1250, 320, 1250, 356, 4)}${dots(1226, 312, 1238, 316, 2)}

  <!-- upper left arm and cross tubes -->
  <path d="M1008 389L1150 430" stroke="#0b0c0d" stroke-width="7"/><path d="M1008 388L1150 429" stroke="#343b42" stroke-width="4"/>
  <path d="M1001 334Q996 340 995 355L987 447" stroke="#08090a" stroke-width="14" stroke-linecap="round"/>
  <path d="M1006 340L1002 425" stroke="#08090a" stroke-width="8"/>
  <path d="M995 345L987 445M1004 350L998 440" stroke="#4c4c4c" stroke-width="2"/>
  <path d="M1007 337q-4 8-1 16" stroke="#d6d6d6" stroke-width="2.500"/>
  <path d="M1003 395l8-4 5 9 8 1 8 5 6 8-14 6-18-6z" fill="#0d0e0f"/><path d="M1008 404l5 2-4 3zM1016 409l4 1-3 3z" fill="#fff"/>
  ${roller(1052, 416, 1140, 438, 14)}
  ${roller(1006, 409, 1130, 443, 13)}
  <path d="M1006 408L1130 441" stroke="#303030" stroke-width="5"/>
  <path d="M1041 411v14M1053 414v15M1065 417v15M1077 420v15M1089 423v15M1101 426v15" stroke="#050505" stroke-width="1.500"/>

  <!-- central panel -->
  <path d="M1025 430L1049 422L1130 446L1127 497L1060 478Z" fill="#0d0f10"/>
  <path d="M1049 428Q1058 448 1063 474L1124 493L1131 451Z" fill="#2b3034" stroke="#070707"/>
  <path d="M1064 476L1125 494L1120 518L1088 508L1060 500Z" fill="#fff"/>
  <path d="M1050 490l10-6-2 28-8-2zM1042 497l6-4-2 10z" fill="#fff"/>

  <!-- left plates -->
  <path d="M980 455L1000 440L1025 440L1046 428L1062 470L1060 560L1000 585L950 560L972 530Z" fill="#0e0f11"/>
  <path d="M985 453L1010 458Q1024 470 1022 490L1018 545L1000 560L970 560L972 525Z" fill="#363b43" stroke="#060606"/>
  <path d="M1034 432L1050 430L1048 500L1030 540L1022 560L1024 500Z" fill="#2f343b" stroke="#060606"/>
  <path d="M1008 442q22 4 30 32M1004 452q16 0 20 20" stroke="#30353b" stroke-width="3"/><path d="M1018 525L1060 480M1022 500l34 8M1040 450l4 40" stroke="#050505" stroke-width="2.500"/>
  <path d="M995 440q-4 5-1 14" stroke="#ddd" stroke-width="2.500"/>
  <ellipse cx="986" cy="513" rx="14" ry="22" fill="#16181a"/>
  <path d="M981 498l3-5 2 18zM988 494l4 2-3 14zM994 502l3 4-6 10zM976 508l4-2 3 12zM974 522l8 1-8 4zM992 521l5-2v5zM974 535l6-6 2 8z" fill="#fff"/>
  <path d="M986 546L998 535L995 556L984 566Z" fill="#e02f2f"/>
  <path d="M942 565L958 545L975 520L985 560L1000 556L1040 525L1045 535L942 612Z" fill="#33383f" stroke="#060606"/>
  ${dots(950, 606, 1035, 535, 10)}
  <ellipse cx="968" cy="560" rx="9" ry="16" fill="#0b0c0d" stroke="#33383e"/>
  <path d="M942 600L1010 560L1060 610L1085 640V700L1010 690L965 712V640Z" fill="#08090a"/>
  <path d="M975 565L986 690M985 565L996 690M1050 500L1020 690M1040 500L1010 670" stroke="#000" stroke-width="4"/>
  <path d="${truss(968, 600, 1000, 580, 968, 655, 1045, 600, 7)}" stroke="#1d2124" stroke-width="2"/>
  <path d="${truss(940, 640, 965, 630, 965, 700, 1040, 640, 8)}" stroke="#181b1e" stroke-width="2"/>

  <!-- indexer wheels behind the drum -->
  <path d="M1045 520L1140 545L1150 600L1100 640L1040 600Z" fill="#0b0c0d"/>
  <path d="M1094 536L1145 548L1150 562L1098 546Z" fill="#e02f2f"/><path d="M1084 550L1150 568V585L1130 580L1084 558Z" fill="#8a1d1d"/><path d="M1120 570l35 6-15 40-12-8z" fill="#7f1b1b"/>
  ${[1062, 1075, 1088, 1101, 1114].map((x, i) => `<ellipse cx="${x}" cy="${513 + i * 3}" rx="8" ry="15" fill="#2c2e30" stroke="#060606" stroke-width="2"/><ellipse cx="${x + 3}" cy="${514 + i * 3}" rx="3" ry="9" fill="#0a0a0a"/>`).join('')}
  <path d="M1040 503L1060 508" stroke="#1c1c1c" stroke-width="12"/>
  ${star(1072, 531, 28, 15, 8, 5, '#313335')}
  <path d="M1063 540H1080V600H1063Z" fill="url(#shaft)"/>
  <path d="M1092 560l20-6M1094 572l24-3M1094 584l26 1" stroke="#2e3134" stroke-width="4"/>

  <!-- flywheel drum -->
  <path d="M984 560L1006 566" stroke="#3a3a3a" stroke-width="9"/>
  <path d="M1017 544Q1003 546 998 570Q996 594 1006 597L1018 600L1028 548Z" fill="url(#tan)" stroke="#222"/>
  <path d="M1022 546L1070 561L1060 612L1010 597Q1006 565 1022 546Z" fill="url(#drum)" stroke="#080808"/>
  <path d="M1036 549q-15 22-10 54M1047 553q-15 22-10 54M1058 557q-15 22-10 54" stroke="#0a0a0a" stroke-width="1.500"/>
  <path d="M1077 561Q1062 560 1057 584Q1055 608 1064 612L1074 614L1084 562Z" fill="url(#tan)" stroke="#222"/>
  <ellipse cx="1077" cy="588" rx="13" ry="26" transform="rotate(12 1077 588)" fill="#cfc08e" stroke="#222"/>
  <ellipse cx="1078" cy="588" rx="9" ry="21" transform="rotate(12 1078 588)" fill="#221f16" stroke="#4a4430"/>
  <path d="M1077 568v40M1068 592l18-12" stroke="#8f8560" stroke-width="2.500"/><ellipse cx="1075" cy="588" rx="5" ry="8" fill="#c7b987"/>
  <path d="M1078 589L1104 597" stroke="#070707" stroke-width="12"/><path d="M1078 588L1104 596" stroke="#3a3a3b" stroke-width="8"/>

  <!-- intake star pair -->
  <path d="M1010 640L1092 622V705L1010 690Z" fill="#0b0c0d"/>
  ${star(1052, 640, 26, 22, 9, 5, '#242627')}${star(1082, 645, 24, 24, 9, 5, '#232425')}
  <path d="M1015 650L1092 672" stroke="#222" stroke-width="10"/>
  ${star(1037, 660, 26, 32, 9, 6, '#2b2c2d')}${star(1066, 664, 26, 32, 9, 6, '#2b2c2d')}
  <circle cx="1010" cy="640" r="6" stroke="#333" stroke-width="2"/><path d="M1014 640l4-2 3 3-4 3zM1078 634l6-2 2 3-6 1z" fill="#9aa1a7"/>
  <path d="M1002 655q-16 14 4 38" stroke="#1a1a1a" stroke-width="3"/>

  <!-- right plate -->
  <path d="M1145 440L1160 425L1180 440L1182 470L1200 520V620L1130 700L1100 760L1090 690Z" fill="#101113"/>
  <path d="M1184 500l12 30v50l-12-18z" fill="#2f343a"/>
  <path d="M1170 515l8-8 6 50-6 14zM1186 500l8-12-2 40z" fill="#fff"/>
  <path d="M1180 480L1190 455Q1196 448 1200 460L1201 590L1160 625L1104 668V690Q1098 696 1092 690V610L1107 588L1128 500L1150 500Q1168 515 1170 545Q1172 570 1168 590L1186 560Z" fill="#363b43" stroke="#060606" stroke-width="1.500"/>
  <path d="M1128 540Q1150 540 1151 570L1150 590L1125 617Q1118 600 1112 590Z" fill="#181a1d"/>
  <path d="M1138 560l12 12-4 14-12 6z" fill="#7f1b1b"/><path d="M1114 600l34-50M1120 610l30-30M1120 560l25 10" stroke="#2b3036" stroke-width="2.500"/>
  <path d="M1140 435L1162 425L1180 440Q1176 450 1178 470L1140 470Z" fill="#0c0d0e"/><path d="M1147 430q18-14 20-4t12 10 8 20" stroke="#22262a" stroke-width="3"/>
  <circle cx="1149" cy="445" r="5" stroke="#2a2e32"/><circle cx="1161" cy="447" r="5" stroke="#2a2e32"/><circle cx="1172" cy="452" r="5" stroke="#2a2e32"/>
  <path d="M1135 468Q1175 455 1184 540" stroke="#2b3035" stroke-width="4"/><path d="M1148 470l16 10-12 30-16-6z" fill="#26292d"/>
  <ellipse cx="1194" cy="471" rx="6" ry="9" fill="#0b0c0d"/><ellipse cx="1194" cy="547" rx="5" ry="8" fill="#0b0c0d"/><ellipse cx="1118" cy="600" rx="6" ry="9" fill="#0b0c0d"/>
  <path d="M1170 562L1184 550V572L1170 578ZM1172 605L1190 592L1192 612L1172 608ZM1150 625L1168 612L1188 618L1164 638ZM1125 645L1146 630L1152 648L1122 658ZM1106 670L1120 662L1150 655L1112 700Z" fill="#0a0b0c" stroke="#3a4046"/>
  ${dots(1190, 570, 1130, 635, 6)}${dots(1108, 640, 1107, 690, 4)}
  <path d="M1142 437Q1136 430 1132 445L1106 590" stroke="#08090a" stroke-width="8"/><path d="M1137 440L1106 590" stroke="#505050" stroke-width="2.500"/>
  <path d="M1143 445L1140 500" stroke="#333" stroke-width="3"/>

  ${post(1178, 1188, 1198, 620, 718)}
  <path d="M1104 700L1178 640V690L1150 725L1110 742Z" fill="#0b0c0d"/>
  <path d="${truss(1108, 735, 1172, 650, 1118, 745, 1176, 692, 9)}" stroke="#22262a" stroke-width="2.500"/><path d="M1150 665l6-4-3 7z" fill="#bbb"/><path d="M1140 680l30 18" stroke="#050505" stroke-width="10"/>

  <!-- lower roller, posts and gearboxes -->
  <path d="M985 700L1000 712L1080 745V700L1030 690Z" fill="#343a41"/>
  ${roller(981, 697, 1082, 727, 19)}
  <path d="M978 691q-4 7 0 14" stroke="#ddd" stroke-width="2.500"/><path d="M980 708l4 8M966 686l30-8M975 690l40-4" stroke="#79828a" stroke-width="2.500" stroke-dasharray="5 5"/>
  <path d="M889 684Q888 676 915 652Q925 650 938 652L948 708Z" fill="url(#mesh)" stroke="#000" stroke-width="3"/>
  <ellipse cx="915" cy="673" rx="16" ry="12" stroke="#1a1d20" stroke-width="2"/>
  <path d="M1100 742L1184 727Q1210 728 1207 742L1190 764Q1180 768 1160 766L1100 750Z" fill="url(#mesh)" stroke="#000" stroke-width="3"/>
  <ellipse cx="1188" cy="744" rx="15" ry="12" stroke="#202427" stroke-width="2"/><ellipse cx="1140" cy="747" rx="20" ry="8" stroke="#202427" stroke-width="2"/>
  ${post(942, 955, 968, 602, 707)}
  ${post(1079, 1090, 1099, 642, 748)}
  <circle cx="1107" cy="710" r="3.200" fill="#333" stroke="#fff" stroke-width="2.400"/>
</svg>`);

define('os-view-cube', `
  :host { display: block; width: 190px; }
  svg { display: block; width: 100%; overflow: visible; font-family: Roboto, sans-serif; }
`, `<svg viewBox="1720 105 190 190" fill="none" role="img" aria-label="View cube">
  <g fill="#e1e8ef"><path d="M1812 109l9 12h-18zM1812 289l9-12h-18zM1722 199l12-9v18zM1902 199l-12-9v18z"/>
  <path d="M1786 119l2 7q-17 5-28 15l3 6-15 3v-14l6 3q14-15 32-20zM1838 119l-2 7q17 5 28 15l-4 6 16 3v-14l-6 3q-14-15-32-20z"/>
  <path d="M1765 178L1793 152Q1797 149 1806 149L1848 161Q1858 166 1858 174V216L1828 247Q1820 252 1812 249L1774 238Q1770 232 1765 228Z"/></g>
  <g fill="#fff"><path d="M1782 168L1798 156Q1802 152 1808 153L1838 161Q1844 164 1840 169L1824 181Q1820 184 1813 183L1784 175Q1780 172 1782 168Z"/>
  <path d="M1778 188Q1771 186 1771 194V222Q1771 229 1777 231L1808 241Q1817 242 1817 234V206Q1817 200 1810 197Z"/>
  <path d="M1850 180Q1856 177 1856 184V208Q1856 214 1851 219L1838 236Q1830 240 1830 232V206Q1830 200 1835 195Z"/>
  <circle cx="1822" cy="194" r="8"/><ellipse cx="1773" cy="179" rx="4" ry="8" transform="rotate(25 1773 179)"/><ellipse cx="1822" cy="243" rx="8" ry="3" transform="rotate(-12 1822 243)"/></g>
  <path d="M1799 182v12M1797 156l3-5M1768 232l4-4M1846 165l12 16" stroke="#fff" stroke-width="2"/>
  <g fill="#333" text-anchor="middle"><text x="1794" y="220" font-size="14" font-weight="500" transform="rotate(12 1794 215)">Back</text>
  <text x="1842" y="213" font-size="11" transform="rotate(-42 1842 209)">Left</text>
  <text x="1812" y="173" font-size="12" transform="rotate(195 1812 169)">Top</text></g>
  <path d="M1801 207L1852 221" stroke="#f2a0a0" stroke-width="1.500"/><path d="M1846 219L1862 224" stroke="#e02020" stroke-width="1.500"/>
  <path d="M1862 163V224" stroke="#4a4ad8" stroke-width="2"/><path d="M1862 225L1827 255" stroke="#4cb04c" stroke-width="2"/>
  <g font-size="16" font-weight="500" text-anchor="middle"><text x="1862" y="159" fill="#3030d0">Z</text><text x="1790" y="209" fill="#f4b8b8">X</text><text x="1820" y="266" fill="#2fa52f">Y</text></g>
</svg>`);

define('os-side-panel', `
  :host { display: flex; flex-direction: column; gap: 12px; width: 37px; }
  div { border: 1px solid #999; border-right: 0; background: #fff; }
  button { width: 100%; height: 39px; }
  button + button { border-top: 1px solid #999; }
  os-icon { width: 22px; height: 22px; margin-top: 2px; }
  .mk { width: 28px; height: 28px; border: 2px solid #dcdcdc; border-radius: 4px; background: #1767d8; outline: 1px solid #222; outline-offset: -3px; color: #fff; font: 700 14px/24px "Liberation Serif", serif; text-align: center; }
  .gap { height: 40px; }
`, `
  <div>
    <button aria-label="Bill of materials"><os-icon name="bom"></os-icon></button>
    <button class="gap" aria-label="Configurations"><os-icon name="config"></os-icon></button>
    <button class="gap" aria-label="Display states"><os-icon name="mirrorp"></os-icon></button>
    <button aria-label="Named positions"><os-icon name="hinge"></os-icon></button>
    <button class="gap" aria-label="Variables"><os-icon name="variable"></os-icon></button>
  </div>
  <div><button><span class="mk">MK</span></button></div>
`);

define('os-viewport', `
  :host { position: relative; display: flex; align-items: center; justify-content: center; padding-top: 67px; min-width: 0; min-height: 0; overflow: hidden; background: #fff; }
  .handle { position: absolute; left: -1px; top: 379px; width: 40px; height: 41px; background: #fff; border: 1px solid #999; border-left: 0; }
  .handle os-icon { width: 21px; height: 20px; margin-top: 3px; }
  os-view-cube { position: absolute; right: 9px; top: 14px; }
  .shade { position: absolute; right: 22px; top: 176px; gap: 9px; }
  .shade os-icon { width: 23px; height: 23px; }
  .shade .c { width: 9px; height: 9px; }
  os-side-panel { position: absolute; right: 0; top: 274px; }
  .measure { position: absolute; right: 13px; bottom: 6px; display: flex; gap: 21px; }
  .measure os-icon { width: 21px; height: 19px; }
`, `
  <os-model></os-model>
  <button class="handle" aria-label="Toggle tree"><os-icon name="outline"></os-icon></button>
  <os-view-cube></os-view-cube>
  <button class="shade" aria-label="Shading"><os-icon name="shaded"></os-icon><os-icon class="c" name="caret"></os-icon></button>
  <os-side-panel></os-side-panel>
  <div class="measure"><button aria-label="Measure"><os-icon name="tape"></os-icon></button><button aria-label="Angle"><os-icon name="protractor"></os-icon></button><button aria-label="Mass"><os-icon name="scale"></os-icon></button></div>
`);

define('os-tab', `
  :host { display: flex; flex: 0 1 auto; min-width: 0; padding-right: 2px; }
  button { flex: 1; justify-content: flex-start; gap: 6px; padding: 2px 0 0 16px; background: #e9e9e9; color: #666; border-radius: 0 0 7px 7px; font-size: 17px; white-space: nowrap; min-width: 0; }
  :host([active]) button { background: #fff; color: #333; }
  :host([plain]) button { padding-left: 14px; }
  .mate { width: 16px; height: 16px; margin-top: -4px; }
  :host([plain]) .mate { display: none; }
  .kind { width: 20px; height: 21px; margin-top: -3px; }
  .folder { height: 16px; }
`, `<button><os-icon class="mate" name="mate"></os-icon><os-icon class="kind"></os-icon><slot></slot></button>`,
(host, root) => {
  host.style.flexBasis = host.getAttribute('w') + 'px';
  const kind = document.createElement('os-icon');
  kind.setAttribute('name', host.getAttribute('icon'));
  kind.className = 'kind ' + host.getAttribute('icon');
  root.querySelector('.kind').replaceWith(kind);
});

define('os-tabs', `
  :host { display: flex; background: #cecece; min-width: 0; }
  .add { width: 47px; flex: none; background: #d4d4d4; padding-right: 7px; }
  .add os-icon { width: 20px; height: 20px; margin-top: 3px; }
  .grow { flex-grow: 1; }
`, `
  <button class="add" aria-label="Add tab"><os-icon name="plus"></os-icon></button>
  <os-tab plain icon="twoparts" w="241">Brass 4in Flywheel</os-tab>
  <os-tab icon="twoparts" w="237">DT Channeling</os-tab>
  <os-tab icon="twoparts" w="191">Bellypan</os-tab>
  <os-tab icon="twoparts" w="244">Shooter/Indexer</os-tab>
  <os-tab icon="twoparts" w="172">Intake</os-tab>
  <os-tab icon="twoparts" w="186">Climber</os-tab>
  <os-tab icon="asm" w="185">Chassis</os-tab>
  <os-tab active icon="asm" w="170">Robot</os-tab>
  <os-tab class="grow" plain icon="folder" w="198">CAD Imports</os-tab>
`);

define('os-app', `
  :host { display: grid; height: 100vh; overflow: hidden;
    grid-template: "head head head" 48px "rail tools tools" 43px "rail tree view" minmax(0, 1fr) "rail tabs tabs" 31px / 48px 247px minmax(0, 1fr); }
  os-header { grid-area: head; } os-toolbar { grid-area: tools; } os-rail { grid-area: rail; }
  os-tree { grid-area: tree; } os-viewport { grid-area: view; } os-tabs { grid-area: tabs; }
`, `
  <os-header></os-header><os-rail></os-rail><os-toolbar></os-toolbar>
  <os-tree></os-tree><os-viewport></os-viewport><os-tabs></os-tabs>
`);
</script>
</body>
</html>
